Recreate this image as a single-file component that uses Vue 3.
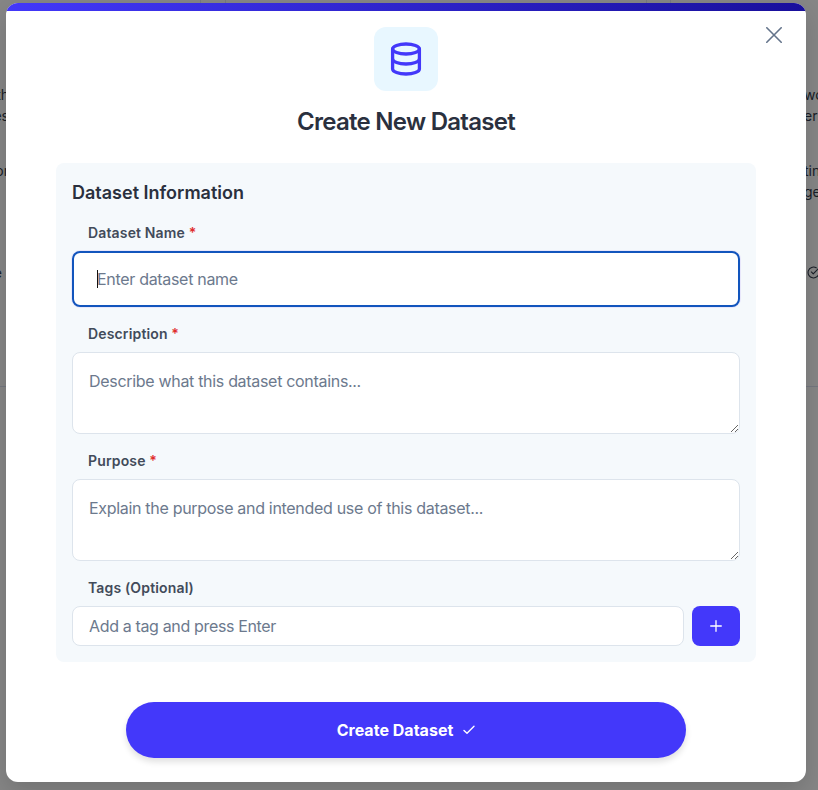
<script setup>
import { ref } from 'vue'

const name = ref('')
const description = ref('')
const purpose = ref('')
const tag = ref('')
</script>

<template>
  <div class="screen">
    <div class="page" aria-hidden="true">
      <div class="tabs"><span class="tab"></span><span class="gap"></span><span class="tab wide"></span><span class="gap last"></span></div>
      <div class="columns">
        <div class="side left">
          <p>th</p>
          <p>es</p>
          <p class="para">or</p>
          <p class="meta">e</p>
        </div>
        <div class="side right">
          <p>wo</p>
          <p>ers</p>
          <p class="para">ting</p>
          <p>ge</p>
          <svg class="verified" viewBox="0 0 24 24" fill="none" stroke="currentColor" stroke-width="2" stroke-linecap="round" stroke-linejoin="round"><path d="M22 10.500V12a10 10 0 1 1-5-8.660" /><path d="m8 11 3.500 3.500L21 5" /></svg>
        </div>
      </div>
    </div>
    <div class="overlay">
      <section class="modal" role="dialog">
        <div class="stripe"></div>
        <button class="close" type="button">
          <svg viewBox="0 0 16 16" fill="none" stroke="currentColor" stroke-width="1.6" stroke-linecap="round"><path d="M.8.8 15.2 15.2M15.2.8.8 15.2" /></svg>
        </button>
        <header class="head">
          <div class="badge">
            <svg viewBox="0 0 40 40" fill="none" stroke="currentColor" stroke-width="3.3" stroke-linecap="round" stroke-linejoin="round">
              <ellipse cx="20" cy="10" rx="13.4" ry="5" />
              <path d="M6.6 10v20c0 2.800 6 5 13.400 5s13.400-2.200 13.400-5V10" />
              <path d="M6.600 20c0 2.800 6 5 13.400 5s13.400-2.200 13.400-5" />
            </svg>
          </div>
          <h1>Create New Dataset</h1>
        </header>
        <form class="panel" @submit.prevent>
          <h2>Dataset Information</h2>
          <label class="l-name">Dataset Name <b>*</b></label>
          <div class="focused">
            <input v-model="name" placeholder="Enter dataset name" />
            <i class="caret"></i>
          </div>
          <label>Description <b>*</b></label>
          <textarea v-model="description" placeholder="Describe what this dataset contains..."></textarea>
          <label>Purpose <b>*</b></label>
          <textarea v-model="purpose" placeholder="Explain the purpose and intended use of this dataset..."></textarea>
          <label>Tags (Optional)</label>
          <div class="tagrow">
            <input v-model="tag" class="tag" placeholder="Add a tag and press Enter" />
            <button class="add" type="button">
              <svg viewBox="0 0 12 12" fill="none" stroke="currentColor" stroke-width="1.3" stroke-linecap="round"><path d="M6 .7v10.600M.7 6h10.600" /></svg>
            </button>
          </div>
        </form>
        <button class="submit" type="button">
          <span>Create Dataset</span>
          <svg viewBox="0 0 12 10" fill="none" stroke="currentColor" stroke-width="1.400" stroke-linecap="round" stroke-linejoin="round"><path d="M1 5.500 4 8.300 11 1.300" /></svg>
        </button>
      </section>
    </div>
  </div>
</template>

<style>
body { margin: 0; background: #868686; }
</style>

<style scoped>
* { box-sizing: border-box; }
.screen {
  position: relative;
  width: 818px;
  height: 790px;
  overflow: hidden;
  background: #868686;
  color: #1a202c;
  font-family: Inter, "Liberation Sans", sans-serif;
}
.page { position: absolute; inset: 0; color: #191d27; }
.tabs { display: flex; height: 3px; padding-left: 200px; }
.tab { width: 1px; background: #777980; }
.gap { width: 24px; }
.tab.wide { width: 422px; border: solid #777980; border-width: 0 1px; background: none; }
.gap.last { border-right: 1px solid #777980; }
.columns { display: flex; justify-content: space-between; height: 384px; border-bottom: 1px solid #74777f; }
.side { display: flex; flex-direction: column; padding-top: 81px; }
.side p { margin: 0; font-size: 14px; line-height: 21px; white-space: nowrap; }
.left { width: 9px; align-items: flex-end; }
.right { width: 14px; align-items: flex-start; }
.side .para { margin-top: 34px; }
.side .meta { margin: 81px 7px 0 0; }
.verified { flex: none; width: 13px; height: 13px; margin: 64px 0 0 3px; }
.overlay { position: absolute; inset: 0; display: flex; justify-content: flex-start; padding: 3px 6px 8px; }
.modal {
  position: relative;
  display: flex;
  flex-direction: column;
  flex: none;
  align-items: center;
  width: 800px;
  height: 779px;
  background: #fff;
  border-radius: 12px;
  overflow: hidden;
  box-shadow: 0 10px 25px rgba(0, 0, 0, .15);
}
.stripe { flex: none; width: 100%; height: 8px; background: linear-gradient(135deg, #4338fa, #180f9b); }
button { border: 0; padding: 0; font: inherit; }
.close { position: absolute; top: 24px; right: 24px; display: flex; width: 16px; height: 16px; background: none; color: #64748b; }
.close svg { width: 16px; height: 16px; }
.head { display: flex; flex-direction: column; align-items: center; padding-top: 16px; }
.badge { display: flex; align-items: center; justify-content: center; width: 64px; height: 64px; border-radius: 12px; background: #e8f7ff; color: #4338fa; }
.badge svg { width: 40px; height: 40px; }
h1 { margin: 16px 0 0; font-size: 24px; line-height: 29px; font-weight: 600; letter-spacing: -.72px; color: #2a303e; white-space: nowrap; }
.panel { display: flex; flex-direction: column; width: 700px; height: 499px; margin-top: 27px; padding: 16px; border-radius: 8px; background: #f5f9fc; }
h2 { margin: 0; font-size: 18px; line-height: 27px; font-weight: 600; letter-spacing: 0; color: #2a303e; }
label { height: 18px; margin: 18px 0 9px 16px; font-size: 14px; line-height: 18px; font-weight: 600; letter-spacing: .15px; color: #424b5a; white-space: nowrap; }
label b { color: #e02d2d; font-weight: 600; }
input, textarea {
  display: block;
  width: 100%;
  margin: 0;
  border: 1px solid #dde4ec;
  border-radius: 8px;
  outline: 0;
  background: #fff;
  font-family: inherit;
  font-size: 16px;
  line-height: 24px;
  letter-spacing: -.31px;
  color: #1a202c;
}
::placeholder { color: #6c798d; opacity: 1; }
.focused { position: relative; height: 56px; }
.focused input { height: 56px; padding: 0 23px; border: 2px solid #1255bd; box-shadow: 0 0 0 1px #e8e7fb; }
.caret { position: absolute; left: 25px; top: 19px; width: 1px; height: 18px; background: #111; }
textarea { flex: none; height: 82px; padding: 16px; resize: vertical; }
.tagrow { display: flex; gap: 8px; }
.tagrow .tag { flex: 1; min-width: 0; height: 40px; padding: 0 16px; letter-spacing: -.35px; }
.add { display: flex; align-items: center; justify-content: center; width: 48px; height: 40px; border-radius: 8px; background: #4338fa; color: #fff; }
.add svg { width: 12px; height: 12px; }
.submit { display: flex; align-items: center; justify-content: center; gap: 10px; flex: none; width: 560px; height: 56px; margin-top: 40px; border-radius: 28px; background: #4338fa; color: #fff; font-size: 16px; font-weight: 650; letter-spacing: .02px; box-shadow: 0 4px 6px rgba(0, 0, 0, .12); }
.submit svg { width: 12px; height: 10px; }
</style>
